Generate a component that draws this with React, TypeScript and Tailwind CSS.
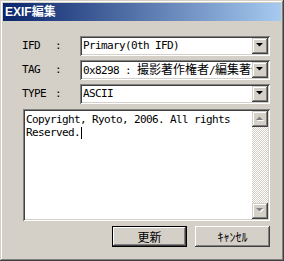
import React from "react";

const mono = { fontFamily: '"DejaVu Sans Mono", "Noto Sans CJK JP", monospace' };
const cjk = { fontFamily: '"Noto Sans CJK JP", sans-serif' };

function Arrow({ disabled, up }: { disabled?: boolean; up?: boolean }) {
  const pts = up ? "0,4 7,4 3.5,0.5" : "0,0 7,0 3.5,3.5";
  return (
    <svg width="8" height="6" viewBox="0 0 8 6" className="block">
      {disabled && <polygon points={pts} transform="translate(1,1)" fill="#ffffff" />}
      <polygon points={pts} fill={disabled ? "#808080" : "#000000"} />
    </svg>
  );
}

function ScrollBtn({ disabled, up }: { disabled?: boolean; up?: boolean }) {
  return (
    <div className="w-[16px] h-[16px] shrink-0 bg-[#d4d0c8] flex items-center justify-center shadow-[inset_-1px_-1px_#404040,inset_1px_1px_#d4d0c8,inset_-2px_-2px_#808080,inset_2px_2px_#ffffff]">
      <Arrow disabled={disabled} up={up} />
    </div>
  );
}

function Select({ children }: { children: React.ReactNode }) {
  return (
    <div className="w-[190px] h-[20px] bg-white flex items-center p-[2px] shadow-[inset_1px_1px_#808080,inset_-1px_-1px_#ffffff,inset_2px_2px_#404040,inset_-2px_-2px_#d4d0c8]">
      <div
        className="flex-1 overflow-hidden whitespace-nowrap text-[11px] tracking-[-0.62px] text-black pl-[1px] leading-[16px]"
        style={mono}
      >
        {children}
      </div>
      <ScrollBtn />
    </div>
  );
}

function Row({ label, children }: { label: string; children: React.ReactNode }) {
  return (
    <div className="flex items-center h-[20px]">
      <div className="w-[33px] text-[11px] tracking-[-0.62px] text-black" style={mono}>
        {label}
      </div>
      <div className="w-[25px] text-[11px] text-black" style={mono}>
        :
      </div>
      <Select>{children}</Select>
    </div>
  );
}

export default function App() {
  return (
    <div className="w-[284px] h-[261px] bg-[#d4d0c8] p-[3px] flex flex-col shadow-[inset_-1px_-1px_#404040,inset_1px_1px_#d4d0c8,inset_-2px_-2px_#808080,inset_2px_2px_#ffffff]">
      <div
        className="h-[18px] flex items-center pl-[2px] text-white font-bold text-[12px] bg-[linear-gradient(to_right,#0a246a,#a6caf0)]"
        style={{ fontFamily: '"Liberation Sans", "Noto Sans CJK JP", sans-serif' }}
      >
        EXIF編集
      </div>
      <div className="flex flex-col pl-[19px] pt-[15px]">
        <div className="flex flex-col gap-[4px]">
          <Row label="IFD">Primary(0th IFD)</Row>
          <Row label="TAG">
            0x8298 :{" "}
            <span className="text-[12px] tracking-normal" style={cjk}>
              撮影著作権者
            </span>
            /
            <span className="text-[12px] tracking-normal" style={cjk}>
              編集著作権者
            </span>
          </Row>
          <Row label="TYPE">ASCII</Row>
        </div>
        <div className="ml-[1px] mt-[5px] w-[247px] h-[112px] bg-white flex p-[2px] shadow-[inset_1px_1px_#808080,inset_-1px_-1px_#ffffff,inset_2px_2px_#404040,inset_-2px_-2px_#d4d0c8]">
          <div
            className="flex-1 pl-[1px] pt-[2px] text-[11px] tracking-[-0.62px] leading-[13px] text-black"
            style={mono}
          >
            <div className="whitespace-nowrap">Copyright, Ryoto, 2006. All rights</div>
            <div className="whitespace-nowrap flex items-center">
              Reserved.
              <span className="inline-block w-[1px] h-[12px] bg-black ml-[1px]" />
            </div>
          </div>
          <div className="w-[16px] flex flex-col">
            <ScrollBtn disabled up />
            <div className="flex-1 bg-[image:conic-gradient(#ffffff_25%,#d4d0c8_0_50%,#ffffff_0_75%,#d4d0c8_0)] bg-[length:2px_2px]" />
            <ScrollBtn disabled />
          </div>
        </div>
        <div className="flex gap-[8px] ml-[90px] mt-[5px]">
          <div className="w-[75px] h-[21px] border border-black bg-[#d4d0c8] flex items-center justify-center shadow-[inset_-1px_-1px_#404040,inset_1px_1px_#ffffff,inset_-2px_-2px_#808080]">
            <span className="text-[12px] text-black" style={cjk}>
              更新
            </span>
          </div>
          <div className="w-[75px] h-[21px] bg-[#d4d0c8] flex items-center justify-center shadow-[inset_-1px_-1px_#404040,inset_1px_1px_#ffffff,inset_-2px_-2px_#808080]">
            <span className="text-[12px] text-black" style={cjk}>
              ｷｬﾝｾﾙ
            </span>
          </div>
        </div>
      </div>
    </div>
  );
}
